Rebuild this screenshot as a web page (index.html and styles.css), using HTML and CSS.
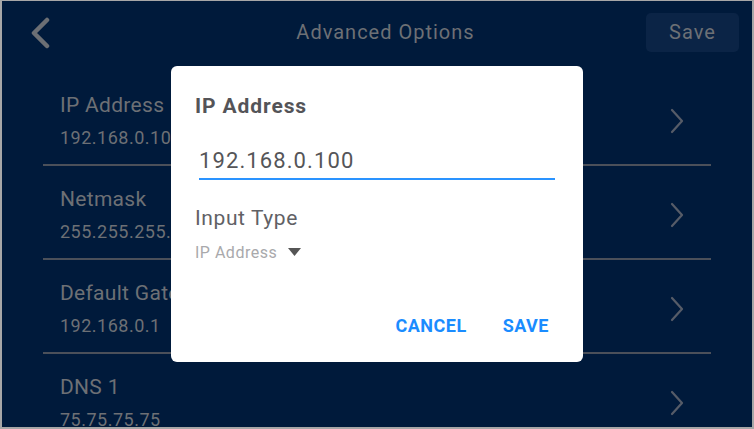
FILE: index.html
```html
<!DOCTYPE html>
<html>
<head>
<title>Advanced Options</title>
<link rel="stylesheet" href="styles.css">
</head>
<body>
<div class="screen">
    <div class="header">
        <div class="back">
            <svg width="24" height="32" viewBox="0 0 24 32"><polyline points="18,3 5,16 18,29" fill="none" stroke="#6c6f74" stroke-width="4.5" stroke-linecap="round" stroke-linejoin="round"/></svg>
        </div>
        <div class="title">Advanced Options</div>
        <div class="btn-save">Save</div>
    </div>
    <div class="list">
        <div class="row">
            <div class="text">
                <div class="label">IP Address</div>
                <div class="value">192.168.0.100</div>
            </div>
            <svg class="arrow" width="16" height="26" viewBox="0 0 16 26"><polyline points="3,2 13,13 3,24" fill="none" stroke="#565c68" stroke-width="2.2" stroke-linecap="round" stroke-linejoin="round"/></svg>
        </div>
        <div class="row">
            <div class="text">
                <div class="label">Netmask</div>
                <div class="value">255.255.255.0</div>
            </div>
            <svg class="arrow" width="16" height="26" viewBox="0 0 16 26"><polyline points="3,2 13,13 3,24" fill="none" stroke="#565c68" stroke-width="2.2" stroke-linecap="round" stroke-linejoin="round"/></svg>
        </div>
        <div class="row">
            <div class="text">
                <div class="label">Default Gateway</div>
                <div class="value">192.168.0.1</div>
            </div>
            <svg class="arrow" width="16" height="26" viewBox="0 0 16 26"><polyline points="3,2 13,13 3,24" fill="none" stroke="#565c68" stroke-width="2.2" stroke-linecap="round" stroke-linejoin="round"/></svg>
        </div>
        <div class="row">
            <div class="text">
                <div class="label">DNS 1</div>
                <div class="value">75.75.75.75</div>
            </div>
            <svg class="arrow" width="16" height="26" viewBox="0 0 16 26"><polyline points="3,2 13,13 3,24" fill="none" stroke="#565c68" stroke-width="2.2" stroke-linecap="round" stroke-linejoin="round"/></svg>
        </div>
    </div>

    <div class="dialog">
        <div class="dlg-title">IP Address</div>
        <div class="dlg-input">192.168.0.100</div>
        <div class="dlg-label">Input Type</div>
        <div class="dlg-select">
            <span>IP Address</span>
            <svg width="13" height="8" viewBox="0 0 13 8"><polygon points="0,0 13,0 6.5,8" fill="#555"/></svg>
        </div>
        <div class="dlg-actions">
            <span class="dlg-btn">CANCEL</span>
            <span class="dlg-btn">SAVE</span>
        </div>
    </div>
</div>
</body>
</html>
```

FILE: styles.css
```css
body {
    margin: 0;
    font-family: Roboto, "Liberation Sans", sans-serif;
}
.screen {
    position: relative;
    width: 754px;
    height: 429px;
    box-sizing: border-box;
    border: 2px solid #a7a7a7;
    border-top-width: 1px;
    background-color: #001a3b;
    overflow: hidden;
}
.header {
    display: flex;
    align-items: center;
    height: 71px;
    padding: 0 13px 8px 27px;
    box-sizing: border-box;
}
.back {
    width: 24px;
    height: 32px;
}
.title {
    flex: 1;
    text-align: center;
    font-size: 20px;
    letter-spacing: 1px;
    color: #6d7075;
    padding-left: 72px;
    margin-bottom: 2px;
}
.btn-save {
    width: 93px;
    height: 39px;
    line-height: 39px;
    text-align: center;
    font-size: 20px;
    letter-spacing: 1px;
    color: #6d7075;
    background-color: #0b2446;
    border-radius: 5px;
}
.list {
    margin: 0 41px 0 41px;
}
.row {
    display: flex;
    align-items: center;
    padding: 21px 26px 16px 17px;
    border-bottom: 2px solid #4b505a;
}
.text {
    flex: 1;
    white-space: nowrap;
}
.label {
    font-size: 21px;
    line-height: 24px;
    letter-spacing: 0.3px;
    color: #6d7075;
}
.value {
    font-size: 18px;
    line-height: 20px;
    letter-spacing: 0.5px;
    margin-top: 11px;
    color: #6d7075;
}
.dialog {
    position: absolute;
    left: 169px;
    top: 65px;
    width: 412px;
    height: 296px;
    box-sizing: border-box;
    padding: 0 24px;
    background-color: #fff;
    border-radius: 6px;
    display: flex;
    flex-direction: column;
}
.dlg-title {
    margin-top: 26px;
    font-size: 21px;
    line-height: 28px;
    letter-spacing: 0.9px;
    font-weight: bold;
    color: #545458;
}
.dlg-input {
    margin: 28px 4px 0 4px;
    font-size: 22px;
    line-height: 26px;
    letter-spacing: 1.1px;
    padding-bottom: 4px;
    color: #555558;
    border-bottom: 2px solid #2a93ff;
}
.dlg-label {
    margin-top: 25px;
    font-size: 21px;
    line-height: 26px;
    letter-spacing: 0.6px;
    color: #616165;
}
.dlg-select {
    display: flex;
    align-items: center;
    gap: 11px;
    margin-top: 12px;
    font-size: 16px;
    line-height: 20px;
    letter-spacing: 0.5px;
    color: #a9a9ac;
}
.dlg-select svg {
    margin-bottom: 2px;
}
.dlg-actions {
    display: flex;
    justify-content: flex-end;
    gap: 36px;
    margin-top: 53px;
    margin-right: 10px;
}
.dlg-btn {
    font-size: 18px;
    font-weight: bold;
    line-height: 20px;
    letter-spacing: 0.5px;
    color: #1a8cff;
}
```
